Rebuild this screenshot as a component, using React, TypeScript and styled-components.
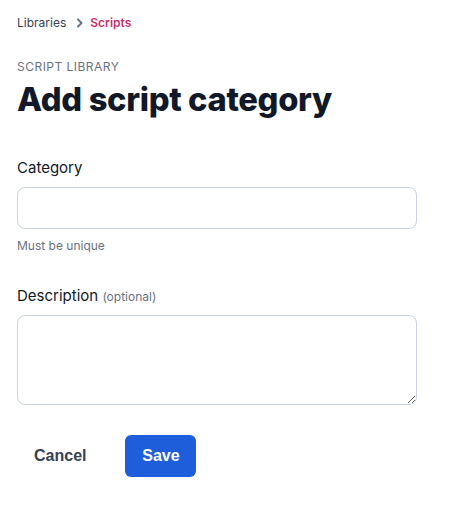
import styled, { createGlobalStyle } from 'styled-components';

const GlobalStyle = createGlobalStyle`
  body {
    margin: 0;
    background: #ffffff;
    font-family: Inter, 'Noto Sans', sans-serif;
    color: #111827;
  }
`;

const App = () => {
  return (
    <>
      <GlobalStyle />
      <Page>
        <Breadcrumbs>
          <Crumb>Libraries</Crumb>
          <Chevron viewBox="0 0 8 10" aria-hidden>
            <path
              d="M2 1.5 5.5 5 2 8.5"
              fill="none"
              stroke="currentColor"
              strokeWidth="2"
              strokeLinecap="round"
              strokeLinejoin="round"
            />
          </Chevron>
          <Crumb $active>Scripts</Crumb>
        </Breadcrumbs>

        <Header>
          <Eyebrow>Script library</Eyebrow>
          <Title>Add script category</Title>
        </Header>

        <Form>
          <Field>
            <Label htmlFor="category">Category</Label>
            <Input id="category" type="text" />
            <Hint>Must be unique</Hint>
          </Field>

          <Field>
            <Label htmlFor="description">
              Description <Optional>(optional)</Optional>
            </Label>
            <TextArea id="description" />
          </Field>

          <Actions>
            <CancelButton type="button">Cancel</CancelButton>
            <SaveButton type="submit">Save</SaveButton>
          </Actions>
        </Form>
      </Page>
    </>
  );
};

const Page = styled.div`
  width: 400px;
  padding: 14px 0 0 17px;
`;
const Breadcrumbs = styled.nav`
  display: flex;
  align-items: center;
  height: 17px;
`;
const Crumb = styled.span<{ $active?: boolean }>`
  font-size: 12px;
  font-weight: ${({ $active }) => ($active ? 600 : 400)};
  color: ${({ $active }) => ($active ? '#c8306c' : '#374151')};
`;
const Chevron = styled.svg`
  width: 8px;
  height: 10px;
  margin: 0 6px 0 10px;
  color: #6b7280;
`;
const Header = styled.div`
  margin-top: 28px;
`;
const Eyebrow = styled.div`
  font-size: 12px;
  line-height: 16px;
  letter-spacing: 0.04em;
  text-transform: uppercase;
  color: #6b7280;
`;
const Title = styled.h1`
  margin: 4px 0 0;
  font-size: 32.7px;
  line-height: 40px;
  font-weight: 800;
  color: #111827;
  letter-spacing: -0.01em;
`;
const Form = styled.form`
  margin-top: 39px;
  display: flex;
  flex-direction: column;
`;
const Field = styled.div`
  display: flex;
  flex-direction: column;

  & + & {
    margin-top: 32px;
  }
`;
const Label = styled.label`
  font-size: 15px;
  line-height: 20px;
  color: #111827;
  margin-bottom: 9px;
`;
const Optional = styled.span`
  font-size: 12px;
  color: #6b7280;
`;
const Input = styled.input`
  box-sizing: border-box;
  width: 400px;
  height: 42px;
  border: 1px solid #cbd2e1;
  border-radius: 8px;
  padding: 8px 12px;
  font: inherit;
  outline: none;
`;
const TextArea = styled.textarea`
  box-sizing: border-box;
  width: 400px;
  height: 90px;
  margin-top: -1px;
  border: 1px solid #cbd2e1;
  border-radius: 8px;
  padding: 8px 12px;
  font: inherit;
  outline: none;
`;
const Hint = styled.div`
  margin-top: 9px;
  font-size: 12px;
  line-height: 16px;
  color: #6b7280;
`;
const Actions = styled.div`
  display: flex;
  align-items: center;
  gap: 22px;
  margin-top: 30px;
`;
const CancelButton = styled.button`
  background: none;
  border: none;
  padding: 11px 17px;
  font-family: 'Liberation Sans', Arial, sans-serif;
  font-size: 16px;
  font-weight: 700;
  color: #374151;
  cursor: pointer;
`;
const SaveButton = styled.button`
  background: #1f5edb;
  border: none;
  border-radius: 6px;
  width: 71px;
  height: 42px;
  font-family: 'Liberation Sans', Arial, sans-serif;
  font-size: 16px;
  font-weight: 700;
  color: #ffffff;
  cursor: pointer;
`;

export default App;
